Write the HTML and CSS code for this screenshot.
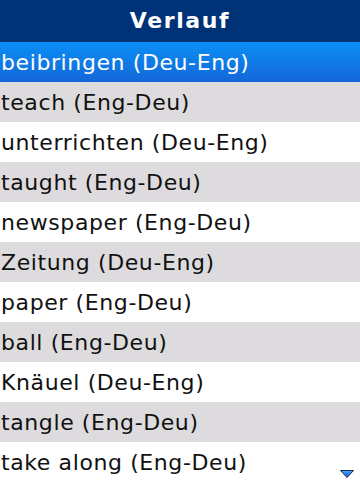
FILE: index.html
```html
<!DOCTYPE html>
<html lang="de">
<head>
<meta charset="UTF-8" />
<title>Verlauf</title>
<meta name="viewport" content="width=device-width, initial-scale=1" />
<link rel="stylesheet" href="styles.css">
</head>
<body>

<div class="screen">
  <div class="title-bar">Verlauf</div>
  <ul class="history">
    <li class="selected">beibringen (Deu-Eng)</li>
    <li>teach (Eng-Deu)</li>
    <li>unterrichten (Deu-Eng)</li>
    <li>taught (Eng-Deu)</li>
    <li>newspaper (Eng-Deu)</li>
    <li>Zeitung (Deu-Eng)</li>
    <li>paper (Eng-Deu)</li>
    <li>ball (Eng-Deu)</li>
    <li>Knäuel (Deu-Eng)</li>
    <li>tangle (Eng-Deu)</li>
    <li>take along (Eng-Deu)</li>
  </ul>
  <svg class="more-arrow" width="14" height="8" viewBox="0 0 14 8">
    <defs>
      <linearGradient id="arrowFill" x1="0" y1="0" x2="0" y2="1">
        <stop offset="0" stop-color="#4aa8ff" />
        <stop offset="1" stop-color="#0a5ed8" />
      </linearGradient>
    </defs>
    <polygon points="0.5,0.5 13.5,0.5 7,7.5" fill="url(#arrowFill)" stroke="#1a2a4a" stroke-width="1" />
  </svg>
</div>

</body>
</html>
```

FILE: styles.css
```css
html, body {
  margin: 0;
  padding: 0;
}
body {
  font-family: 'DejaVu Sans', sans-serif;
  background: #fff;
  overflow: hidden;
}
.screen {
  position: relative;
  width: 360px;
  height: 480px;
  overflow: hidden;
}
.title-bar {
  height: 42px;
  line-height: 41px;
  background: #003278;
  color: #fff;
  font-weight: 700;
  font-size: 22px;
  letter-spacing: 1.6px;
  text-align: center;
}
.history {
  list-style: none;
  margin: 0;
  padding: 0;
}
.history li {
  height: 38px;
  line-height: 38px;
  padding-top: 2px;
  padding-left: 1px;
  font-size: 22px;
  letter-spacing: 0.6px;
  color: #111;
  white-space: nowrap;
  background: #fff;
}
.history li:nth-child(even) {
  background: #dddbdd;
}
.history li.selected {
  background: linear-gradient(#0a90f5, #1466d8);
  color: #fff;
}
.more-arrow {
  position: absolute;
  right: 6px;
  bottom: 2px;
}
```
